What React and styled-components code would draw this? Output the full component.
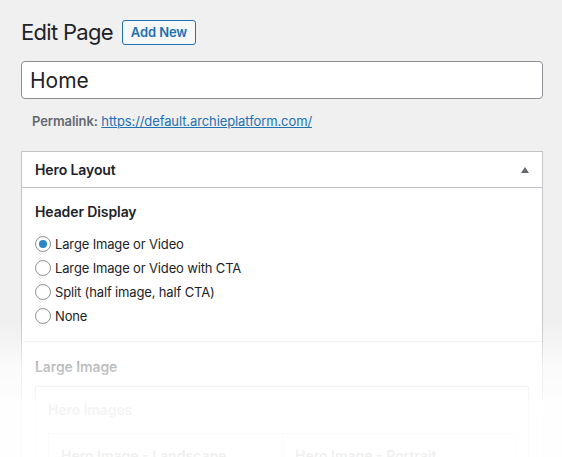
import React, { useState } from 'react';
import styled, { createGlobalStyle } from 'styled-components';

const GlobalStyle = createGlobalStyle`
  html, body {
    margin: 0;
    padding: 0;
    background: #f0f0f1;
  }
  body {
    font-family: Inter, "Liberation Sans", Arial, sans-serif;
    color: #1d2327;
    -webkit-font-smoothing: antialiased;
  }
`;

// STYLES
const Screen = styled.div`
  position: relative;
  height: 457px;
  overflow: hidden;
`;

const Wrap = styled.div`
  padding: 19px 19px 0 21px;
`;

const HeadRow = styled.div`
  display: flex;
  align-items: center;
  gap: 9px;
`;

const Title = styled.h1`
  margin: 0;
  font-size: 22px;
  font-weight: 400;
  letter-spacing: -0.7px;
  line-height: 26px;
  color: #1d2327;
`;

const AddNewBtn = styled.button`
  height: 25px;
  padding: 0 8px;
  border: 1px solid #2271b1;
  border-radius: 3px;
  background: #f6f7f7;
  color: #2271b1;
  font-family: inherit;
  font-size: 13px;
  font-weight: 600;
  letter-spacing: -0.1px;
  cursor: pointer;
`;

const TitleInput = styled.input`
  display: block;
  box-sizing: border-box;
  width: 100%;
  height: 38px;
  margin-top: 16px;
  padding: 0 8px;
  border: 1px solid #8c8f94;
  border-radius: 4px;
  background: #fff;
  font-family: inherit;
  font-size: 21px;
  color: #1d2327;
  outline: none;
`;

const Permalink = styled.div`
  padding: 12px 11px 0;
  font-size: 13px;
  line-height: 20px;
  letter-spacing: -0.1px;
  color: #646970;
  & strong {
    font-weight: 600;
  }
  & a {
    color: #2271b1;
    text-decoration: underline;
  }
`;

const Postbox = styled.div`
  margin-top: 20px;
  border: 1px solid #c3c4c7;
  background: #fff;
`;

const PostboxHeader = styled.div`
  display: flex;
  align-items: center;
  justify-content: space-between;
  height: 35px;
  padding: 0 13px;
  border-bottom: 1px solid #c3c4c7;
`;

const PostboxTitle = styled.h2`
  margin: 0;
  font-size: 14px;
  font-weight: 600;
  letter-spacing: -0.1px;
  color: #1d2327;
`;

const Toggle = styled.span`
  width: 0;
  height: 0;
  border-left: 4px solid transparent;
  border-right: 4px solid transparent;
  border-bottom: 6px solid #646970;
`;

const Field = styled.div`
  padding: ${props => props.padd || '14px 13px 17px'};
  border-top: ${props => (props.divided ? '1px solid #eee' : '0')};
`;

const FieldLabel = styled.div`
  font-size: 14px;
  font-weight: 600;
  line-height: 20px;
  letter-spacing: -0.1px;
  color: #1d2327;
`;

const RadioList = styled.ul`
  list-style: none;
  margin: 14px 0 0;
  padding: 0;
  display: flex;
  flex-direction: column;
  gap: 8px;
`;

const RadioRow = styled.li`
  display: flex;
  align-items: center;
  gap: 4px;
  font-size: 13px;
  line-height: 16px;
  letter-spacing: -0.15px;
  color: #1d2327;
  cursor: pointer;
`;

const RadioDot = styled.span`
  box-sizing: border-box;
  width: 16px;
  height: 16px;
  border-radius: 50%;
  border: 1px solid #8c8f94;
  background: #fff;
  display: flex;
  align-items: center;
  justify-content: center;
  &::after {
    content: '';
    width: 8px;
    height: 8px;
    border-radius: 50%;
    background: ${props => (props.checked ? '#2a86c9' : 'transparent')};
  }
`;

const Group = styled.div`
  margin-top: 9px;
  border: 1px solid #c3c4c7;
  padding: 13px 12px;
`;

const Columns = styled.div`
  display: grid;
  grid-template-columns: 1fr 1fr;
  margin-top: 13px;
  border: 1px solid #c3c4c7;
  & > div + div {
    border-left: 1px solid #c3c4c7;
  }
`;

const Column = styled.div`
  padding: 12px 12px;
  font-size: 14px;
  font-weight: 600;
  line-height: 20px;
  height: 60px;
`;

// white wash over the bottom of the page
const Fade = styled.div`
  position: absolute;
  left: 0;
  right: 0;
  top: 322px;
  bottom: 0;
  pointer-events: none;
  background: linear-gradient(
    to bottom,
    rgba(255, 255, 255, 0) 0%,
    rgba(255, 255, 255, 0.7) 33%,
    rgba(255, 255, 255, 0.86) 57%,
    rgba(255, 255, 255, 0.95) 59%,
    rgba(255, 255, 255, 0.93) 100%
  );
`;

const options = [
  'Large Image or Video',
  'Large Image or Video with CTA',
  'Split (half image, half CTA)',
  'None',
];

const App = () => {
  const [display, setDisplay] = useState(0);

  return (
    <Screen>
      <GlobalStyle />
      <Wrap>
        <HeadRow>
          <Title>Edit Page</Title>
          <AddNewBtn>Add New</AddNewBtn>
        </HeadRow>
        <TitleInput defaultValue="Home" />
        <Permalink>
          <strong>Permalink:</strong>{' '}
          <a href="#home">https://default.archieplatform.com/</a>
        </Permalink>

        <Postbox>
          <PostboxHeader>
            <PostboxTitle>Hero Layout</PostboxTitle>
            <Toggle />
          </PostboxHeader>

          <Field>
            <FieldLabel>Header Display</FieldLabel>
            <RadioList>
              {options.map((label, i) => (
                <RadioRow key={label} onClick={() => setDisplay(i)}>
                  <RadioDot checked={display === i} />
                  {label}
                </RadioRow>
              ))}
            </RadioList>
          </Field>

          <Field divided padd="15px 13px 20px">
            <FieldLabel>Large Image</FieldLabel>
            <Group>
              <FieldLabel>Hero Images</FieldLabel>
              <Columns>
                <Column>Hero Image - Landscape</Column>
                <Column>Hero Image - Portrait</Column>
              </Columns>
            </Group>
          </Field>
        </Postbox>
      </Wrap>
      <Fade />
    </Screen>
  );
};

export default App;
